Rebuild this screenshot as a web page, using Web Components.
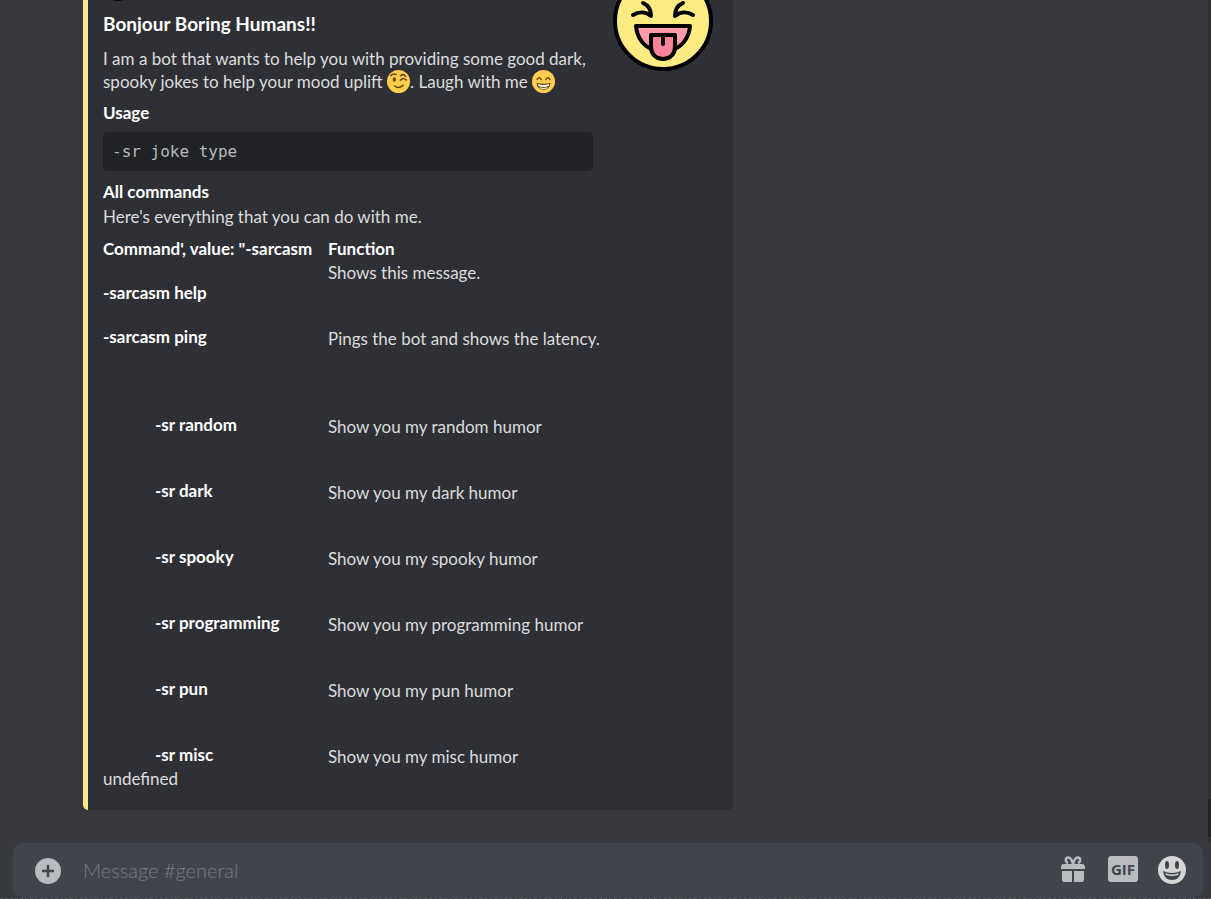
<!DOCTYPE html>
<html lang="en">
<head>
<meta charset="utf-8">
<meta name="viewport" content="width=device-width, initial-scale=1">
<title>#general</title>
<style>
  body { margin: 0; background: #37393e; color: #dcddde; font: 17px/22px Lato, sans-serif; }
</style>
</head>
<body>
<chat-app>
  <chat-embed>
    <embed-heading slot="body">Bonjour Boring Humans!!</embed-heading>
    <embed-text slot="body">I am a bot that wants to help you with providing some good dark, spooky jokes to help your mood uplift <chat-emoji name="wink"></chat-emoji>. Laugh with me <chat-emoji name="grin"></chat-emoji></embed-text>
    <embed-field slot="body" name="Usage"><code-block>-sr joke type</code-block></embed-field>
    <embed-field slot="body" name="All commands">Here's everything that you can do with me.</embed-field>
    <command-list slot="body"></command-list>
  </chat-embed>
</chat-app>

<script>
const define = (name, html, init) => customElements.define(name, class extends HTMLElement {
  constructor() {
    super();
    this.attachShadow({ mode: 'open' });
  }
  connectedCallback() {
    this.shadowRoot.innerHTML = html;
    if (init) init(this, this.shadowRoot);
  }
});

define('chat-app', `
  <style>
    :host { display: flex; flex-direction: column; height: 100vh; overflow: hidden; }
    main { flex: 1; min-height: 0; display: flex; overflow: hidden; }
    .log { flex: 1; min-width: 0; display: flex; flex-direction: column; justify-content: flex-end; align-items: flex-start; padding: 0 20px 33px 83px; }
    .track { width: 3px; background: #2f3136; display: flex; flex-direction: column; justify-content: flex-end; padding-bottom: 6px; box-sizing: border-box; }
    .thumb { height: 38px; background: #202225; border-radius: 4px 0 0 4px; }
    footer { padding: 0 8px 0 13px; border-bottom: 1px dashed #55575c; }
  </style>
  <main>
    <div class="log"><slot></slot></div>
    <div class="track"><div class="thumb"></div></div>
  </main>
  <footer><message-composer></message-composer></footer>`);

define('chat-embed', `
  <style>
    :host { display: block; width: 100%; max-width: 650px; flex: none; }
    article { display: grid; grid-template-columns: minmax(0, 1fr) 100px; column-gap: 20px; background: #2f3035; border-left: 5px solid #fbe78c; border-radius: 5px; padding: 10px 20px 20px 15px; }
  </style>
  <article>
    <div>
      <laughing-face size="30"></laughing-face>
      <slot name="body"></slot>
    </div>
    <laughing-face size="100"></laughing-face>
  </article>`);

define('laughing-face', `
  <style>
    :host { display: block; }
    svg { display: block; }
  </style>
  <svg viewBox="0 0 100 100" fill="none" stroke="#000" stroke-width="4" stroke-linecap="round" stroke-linejoin="round" role="img" aria-label="Laughing face">
    <circle cx="50" cy="50" r="48" fill="#feec83"/>
    <path d="M30 32C35 34 38 39 38 45C32 40 25 41 20 44M70 32C65 34 62 39 62 45C68 40 75 41 80 44"/>
    <path d="M23 55H77C76 67 69 76 59 79H41C31 76 24 67 23 55Z" fill="#fe9ca9"/>
    <path d="M38 64H62V76C62 83 57 88 50 88S38 83 38 76Z" fill="#fb8398"/>
    <path d="M50 64V73"/>
  </svg>`, (el, root) => {
  const svg = root.querySelector('svg');
  svg.setAttribute('width', el.getAttribute('size'));
  svg.setAttribute('height', el.getAttribute('size'));
});

define('embed-heading', `
  <style>
    :host { display: block; margin-top: 11px; }
    h2 { margin: 0; font-size: 19px; line-height: 24px; font-weight: 700; color: #fff; }
  </style>
  <h2><slot></slot></h2>`);

define('embed-text', `
  <style>
    :host { display: block; margin-top: 11px; }
    p { margin: 0; line-height: 23px; }
  </style>
  <p><slot></slot></p>`);

define('embed-field', `
  <style>
    :host { display: block; margin-top: 9px; }
    h3 { margin: 0 0 3px; font-size: 17px; line-height: 22px; font-weight: 700; color: #fff; }
  </style>
  <h3></h3><slot></slot>`, (el, root) => {
  root.querySelector('h3').textContent = el.getAttribute('name');
});

define('code-block', `
  <style>
    :host { display: block; padding: 5px 0 1px; }
    pre { margin: 0; padding: 9px 9px 8px; background: #202225; border-radius: 5px; color: #b9bbbe; font: 16px/22px "DejaVu Sans Mono", monospace; }
    code { font: inherit; }
  </style>
  <pre><code><slot></slot></code></pre>`);

define('chat-emoji', `
  <style>
    :host { display: inline-block; width: 23px; height: 23px; vertical-align: bottom; }
    svg { display: block; width: 23px; height: 23px; }
  </style><span></span>`, (el, root) => {
  const faces = {
    wink: `<svg viewBox="0 0 36 36" role="img" aria-label="Winking face"><circle cx="18" cy="18" r="18" fill="#ffcc4d"/>
      <ellipse cx="11.500" cy="15" rx="2.500" ry="3.500" fill="#664500"/>
      <path d="M6 9Q9 5 14 7M21 9Q26 5 29 10M21 16Q25 11 30 15.500M12 25Q18 30 25 24" fill="none" stroke="#664500" stroke-width="2.400" stroke-linecap="round"/></svg>`,
    grin: `<svg viewBox="0 0 36 36" role="img" aria-label="Grinning face"><circle cx="18" cy="18" r="18" fill="#ffcc4d"/>
      <path d="M8 15Q11 9 14.500 15M21.500 15Q25 9 28 15" fill="none" stroke="#664500" stroke-width="2.200" stroke-linecap="round"/>
      <path d="M7 20Q18 23 29 20Q28 31 18 31T7 20Z" fill="#664500"/>
      <path d="M9 22Q18 25 27 22L26 25Q18 28 10 25Z" fill="#fff"/><path d="M12 28Q18 30 24 28Q18 30.500 12 28Z" fill="#fff" stroke="#fff"/></svg>`
  };
  root.querySelector('span').innerHTML = faces[el.getAttribute('name')];
});

define('command-list', `
  <style>
    :host { display: grid; grid-template-columns: 213px minmax(0, 1fr); column-gap: 12px; margin-top: 10px; white-space: nowrap; }
    h3, p { margin: 0; font-size: 17px; line-height: 22px; }
    h3 { font-weight: 700; color: #fff; }
    .name { margin-top: 22px; }
    .joke { margin-top: 44px; padding-left: 52px; }
    .spaced { margin-top: 44px; }
    .first { margin-top: 66px; }
    .value { margin-top: 2px; }
  </style>
  <div>
    <h3>Command', value: "-sarcasm</h3>
    <h3 class="name">-sarcasm help</h3>
    <h3 class="name">-sarcasm ping</h3>
    <h3 class="joke first">-sr random</h3>
    <h3 class="joke">-sr dark</h3>
    <h3 class="joke">-sr spooky</h3>
    <h3 class="joke">-sr programming</h3>
    <h3 class="joke">-sr pun</h3>
    <h3 class="joke">-sr misc</h3>
    <p class="value">undefined</p>
  </div>
  <div>
    <h3>Function</h3>
    <p class="value">Shows this message.</p>
    <p class="spaced">Pings the bot and shows the latency.</p>
    <p class="first">Show you my random humor</p>
    <p class="spaced">Show you my dark humor</p>
    <p class="spaced">Show you my spooky humor</p>
    <p class="spaced">Show you my programming humor</p>
    <p class="spaced">Show you my pun humor</p>
    <p class="spaced">Show you my misc humor</p>
  </div>`);

define('message-composer', `
  <style>
    :host { display: block; }
    form { display: flex; align-items: center; height: 55px; background: #40444b; border-radius: 10px; padding: 0 15px 0 20px; }
    button { display: block; border: 0; padding: 0; background: none; width: 30px; height: 30px; color: #b9bbbe; flex: none; }
    svg { display: block; width: 30px; height: 30px; }
    input { flex: 1; min-width: 0; height: 30px; border: 0; padding: 0 0 2px; box-sizing: border-box; margin: 0 20px; background: none; outline: 0; color: #dcddde; font: 300 20px/28px Lato, sans-serif; }
    input::placeholder { color: #787b80; opacity: 1; }
    .tools { display: flex; gap: 20px; }
  </style>
  <form onsubmit="return false">
    <button type="button" aria-label="Attach a file"><svg viewBox="0 0 30 30"><circle cx="15" cy="15" r="13" fill="currentColor"/><path d="M15 9V21M9 15H21" stroke="#40444b" stroke-width="2.500"/></svg></button>
    <input type="text" placeholder="Message #general" aria-label="Message #general">
    <div class="tools">
      <button type="button" aria-label="Send a gift"><svg viewBox="0 1 30 30" fill="currentColor">
        <path d="M3 12Q3 9 6 9H24Q27 9 27 12V14H3ZM4 16H14V27H6Q4 27 4 25ZM16 16H26V25Q26 27 24 27H16Z"/>
        <path d="M15 9Q13 2 10 2.500C7 3 7 7 10 8M15 9Q17 2 20 2.500C23 3 23 7 20 8" fill="none" stroke="currentColor" stroke-width="2.400"/></svg></button>
      <button type="button" aria-label="Open GIF picker"><gif-badge></gif-badge></button>
      <button type="button" aria-label="Select emoji"><svg viewBox="1 1 30 30"><circle cx="15" cy="15" r="14" fill="#d4d5d4"/>
        <ellipse cx="10" cy="10" rx="2" ry="4" fill="#40444b"/><ellipse cx="20" cy="10" rx="2" ry="4" fill="#40444b"/>
        <path d="M6 16Q15 20 24 16Q23 25 15 25T6 16Z" fill="#40444b"/><path d="M8 18Q15 21 22 18L21 20Q15 22 9 20Z" fill="#d4d5d4"/></svg></button>
    </div>
  </form>`);

define('gif-badge', `
  <style>
    :host { display: block; padding: 0 0 4px; }
    span { display: block; height: 26px; background: #b9bbbe; border-radius: 3px; color: #40444b; font: 700 15px/26px "Open Sans", sans-serif; text-align: center; }
  </style>
  <span>GIF</span>`);
</script>
</body>
</html>
